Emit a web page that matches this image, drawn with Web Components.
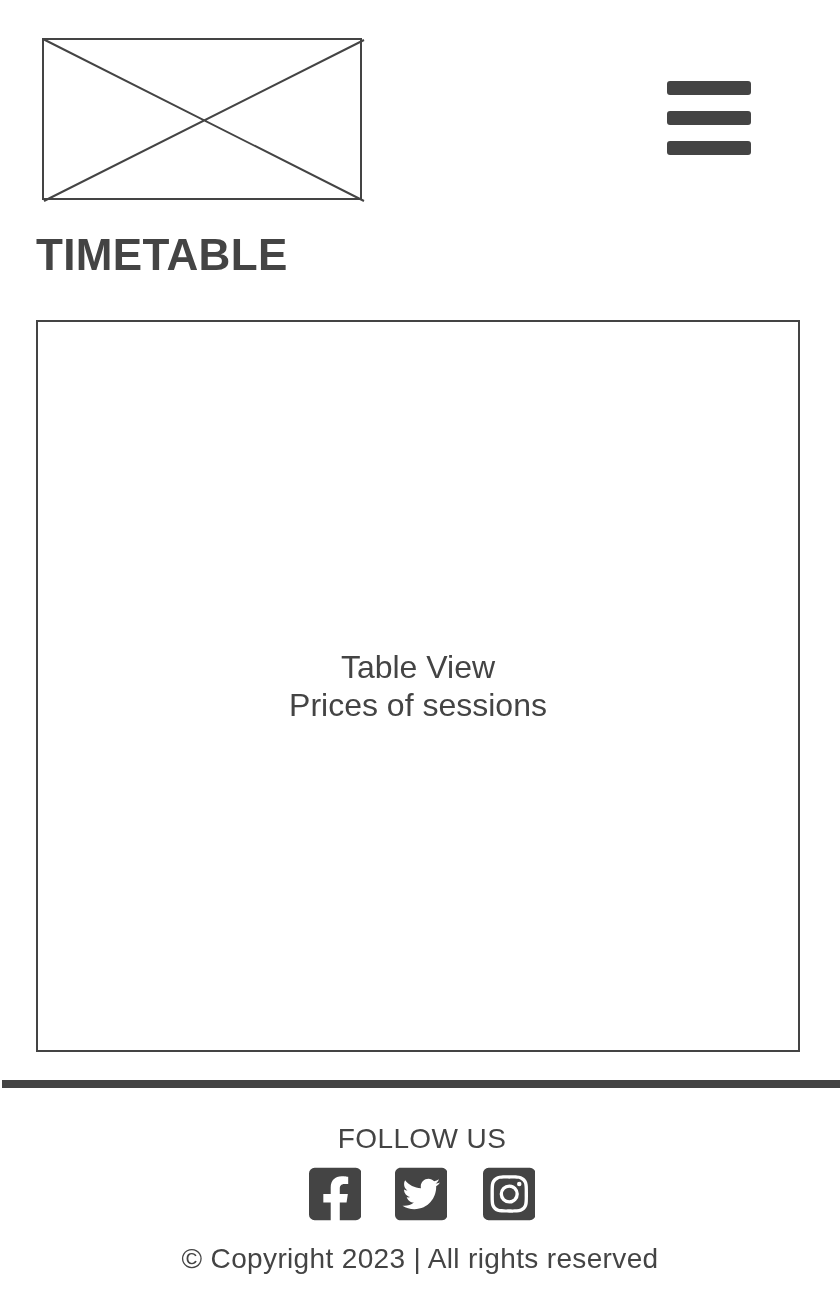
<!DOCTYPE html>
<html lang="en">
<head>
<meta charset="utf-8">
<title>Timetable</title>
<style>
  html, body {
    background: #ffffff;
    color: #444444;
    font-family: "Liberation Sans", Arial, sans-serif;
    margin: 0;
    overflow-x: hidden;
    padding: 0;
  }
</style>
</head>
<body>
<tt-header></tt-header>
<tt-title>TIMETABLE</tt-title>
<tt-placeholder>
  <div>Table View</div>
  <div>Prices of sessions</div>
</tt-placeholder>
<tt-footer></tt-footer>

<script>
class TtHeader extends HTMLElement {
  constructor() {
    super();
    this.attachShadow( {mode: 'open'} );
    this.shadowRoot.innerHTML = /* template */ `
      <style>
        :host {
          align-items: center;
          box-sizing: border-box;
          display: flex;
          flex-direction: row;
          justify-content: space-between;
          padding: 38px 89px 0 42px;
        }

        svg {
          display: block;
        }

        button {
          appearance: none;
          background: none;
          border: none;
          display: flex;
          flex-direction: column;
          gap: 16px;
          margin: -6px 0 0 0;
          padding: 0;
        }

        button span {
          background: #444444;
          border-radius: 3px;
          display: block;
          height: 14px;
          width: 84px;
        }
      </style>
      <svg xmlns="http://www.w3.org/2000/svg" width="323" height="165" viewBox="0 0 323 165">
        <rect x="1" y="1" width="318" height="160" fill="none" stroke="#444444" stroke-width="2"/>
        <path d="M1 1L322 163M322 2L2 163" fill="none" stroke="#444444" stroke-width="2"/>
      </svg>
      <button type="button" aria-label="Menu">
        <span></span>
        <span></span>
        <span></span>
      </button>
    `;
  }
}

class TtTitle extends HTMLElement {
  constructor() {
    super();
    this.attachShadow( {mode: 'open'} );
    this.shadowRoot.innerHTML = /* template */ `
      <style>
        :host {
          color: #444444;
          display: block;
          font-size: 44px;
          font-weight: 700;
          letter-spacing: 0.35px;
          line-height: 48px;
          padding: 28px 0 0 36px;
          will-change: transform;
        }
      </style>
      <slot></slot>
    `;
  }
}

class TtPlaceholder extends HTMLElement {
  constructor() {
    super();
    this.attachShadow( {mode: 'open'} );
    this.shadowRoot.innerHTML = /* template */ `
      <style>
        :host {
          align-items: center;
          border: solid 2px #444444;
          box-sizing: border-box;
          color: #444444;
          display: flex;
          flex-direction: column;
          font-size: 32px;
          height: 732px;
          justify-content: center;
          line-height: 38px;
          margin: 41px 0 0 36px;
          text-align: center;
          width: 764px;
          will-change: transform;
        }
      </style>
      <slot></slot>
    `;
  }
}

class TtFooter extends HTMLElement {
  constructor() {
    super();
    this.attachShadow( {mode: 'open'} );
    this.shadowRoot.innerHTML = /* template */ `
      <style>
        :host {
          border-top: solid 8px #444444;
          box-sizing: border-box;
          color: #444444;
          display: block;
          margin: 28px 0 0 2px;
          padding-top: 35px;
          text-align: center;
          width: 840px;
          will-change: transform;
        }

        h2 {
          font-size: 28px;
          font-weight: 400;
          letter-spacing: 0.4px;
          line-height: 32px;
          margin: 0;
        }

        nav {
          display: flex;
          flex-direction: row;
          justify-content: center;
          margin-top: 9px;
        }

        nav svg {
          display: block;
          fill: #444444;
          height: 60px;
          width: 52.5px;
        }

        nav svg + svg {
          margin-left: 33.5px;
        }

        nav svg:last-child {
          margin-left: 35.5px;
        }

        p {
          font-size: 28px;
          letter-spacing: 0.35px;
          line-height: 32px;
          margin: 19px 4px 0 0;
        }
      </style>
      <h2>FOLLOW US</h2>
      <nav>
        <svg xmlns="http://www.w3.org/2000/svg" viewBox="0 0 448 512"><path d="M400 32H48A48 48 0 0 0 0 80v352a48 48 0 0 0 48 48h137.25V327.69h-63V256h63v-54.64c0-62.15 37-96.48 93.67-96.48 27.14 0 55.52 4.84 55.52 4.84v61h-31.27c-30.81 0-40.42 19.12-40.42 38.73V256h68.78l-11 71.69h-57.78V480H400a48 48 0 0 0 48-48V80a48 48 0 0 0-48-48z"/></svg>
        <svg xmlns="http://www.w3.org/2000/svg" viewBox="0 0 448 512"><path d="M400 32H48C21.5 32 0 53.5 0 80v352c0 26.5 21.5 48 48 48h352c26.5 0 48-21.5 48-48V80c0-26.5-21.5-48-48-48zm-48.9 158.8c.2 2.8.2 5.7.2 8.5 0 86.7-66 186.6-186.6 186.6-37.2 0-71.7-10.8-100.7-29.4 5.3.6 10.4.8 15.8.8 30.7 0 58.9-10.4 81.4-28-28.8-.6-53-19.5-61.3-45.5 10.1 1.5 19.2 1.5 29.6-1.2-30-6.1-52.5-32.5-52.5-64.4v-.8c8.7 4.9 18.9 7.9 29.6 8.3a65.447 65.447 0 0 1-29.2-54.6c0-12.2 3.2-23.4 8.9-33.1 32.3 39.8 80.8 65.8 135.2 68.6-9.3-44.5 24-80.6 64-80.6 18.9 0 35.9 7.9 47.9 20.7 14.8-2.8 29-8.3 41.6-15.8-4.9 15.2-15.1 28-28.6 36 13.1-1.4 25.8-5 37.6-10.1-8.9 13.1-20.1 24.7-32.9 34z"/></svg>
        <svg xmlns="http://www.w3.org/2000/svg" viewBox="0 0 448 512"><path d="M224,202.66A53.34,53.34,0,1,0,277.36,256,53.38,53.38,0,0,0,224,202.66Zm124.71-41a54,54,0,0,0-30.41-30.41c-21-8.29-71-6.43-94.3-6.43s-73.25-1.93-94.31,6.43a54,54,0,0,0-30.41,30.41c-8.28,21-6.43,71.05-6.43,94.33S91,329.26,99.32,350.33a54,54,0,0,0,30.41,30.41c21,8.29,71,6.43,94.31,6.43s73.24,1.93,94.3-6.43a54,54,0,0,0,30.41-30.41c8.35-21,6.43-71.05,6.43-94.33S357.1,182.74,348.75,161.67ZM224,338a82,82,0,1,1,82-82A81.9,81.9,0,0,1,224,338Zm85.38-148.3a19.14,19.14,0,1,1,19.13-19.14A19.1,19.1,0,0,1,309.42,189.74ZM400,32H48A48,48,0,0,0,0,80V432a48,48,0,0,0,48,48H400a48,48,0,0,0,48-48V80A48,48,0,0,0,400,32ZM382.88,322c-1.29,25.63-7.14,48.34-25.85,67s-41.4,24.63-67,25.85c-26.41,1.49-105.59,1.49-132,0-25.63-1.29-48.26-7.15-67-25.85s-24.63-41.42-25.85-67c-1.49-26.42-1.49-105.61,0-132,1.29-25.63,7.07-48.34,25.85-67s41.47-24.56,67-25.78c26.41-1.49,105.59-1.49,132,0,25.63,1.29,48.33,7.15,67,25.85s24.63,41.42,25.85,67.05C384.37,216.44,384.37,295.56,382.88,322Z"/></svg>
      </nav>
      <p>© Copyright 2023 | All rights reserved</p>
    `;
  }
}

window.customElements.define( 'tt-header', TtHeader );
window.customElements.define( 'tt-title', TtTitle );
window.customElements.define( 'tt-placeholder', TtPlaceholder );
window.customElements.define( 'tt-footer', TtFooter );
</script>
</body>
</html>
